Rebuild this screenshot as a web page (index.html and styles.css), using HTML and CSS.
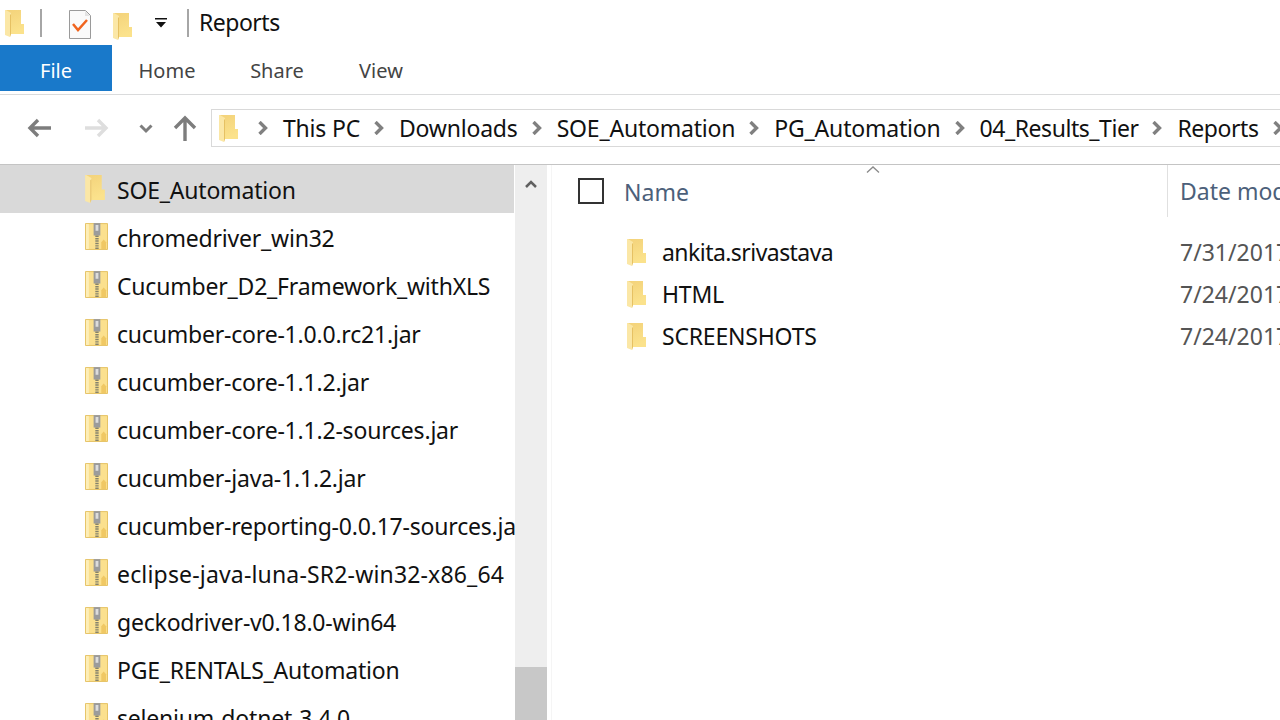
FILE: index.html
```html
<!doctype html>
<html lang="en">
<head>
<meta charset="utf-8">
<title>Reports</title>
<link rel="stylesheet" href="styles.css">
</head>
<body>
<svg class="defs" width="0" height="0">
  <defs>
    <linearGradient id="folderfill" x1="0" y1="0" x2="0.3" y2="1">
      <stop offset="0" stop-color="#f3d27a"/>
      <stop offset="1" stop-color="#fbe28c"/>
    </linearGradient>
  </defs>
  <symbol id="folder" viewBox="0 0 19 27">
    <path fill="url(#folderfill)" d="M0 0h16v14l3 0v10H6z"/>
    <path fill="#fbe7a6" d="M0 0h1l5 3v21l-1 3-5-2z"/>
    <path fill="#e6c163" d="M5 27V5l1-1v20z"/>
  </symbol>
  <symbol id="zip" viewBox="0 0 24 29">
    <path fill="#fbe08e" stroke="#e5c060" d="M.5.5h23v27H.5z"/>
    <path fill="#fdeeb8" d="M1 1h3v26H1z"/>
    <path fill="#f0c864" d="M19.500 17l2.500 3v7h-5v-7z"/>
    <path fill="#9b9b9b" d="M9 0h7v13H9z"/>
    <path fill="#dcdcdc" d="M11 2h3v6h-3z"/>
    <path fill="none" stroke="#85826c" stroke-width="3.500" stroke-dasharray="1.500 1" d="M12.500 13v15"/>
  </symbol>
  <symbol id="chev" viewBox="0 0 10 14">
    <path fill="none" stroke="#808080" stroke-width="3.400" d="M1.500 1l6 6-6 6"/>
  </symbol>
</svg>

<header class="titlebar">
  <svg class="qa-folder first"><use href="#folder"/></svg>
  <span class="qa-sep"></span>
  <svg class="qa-check" viewBox="0 0 22 29">
    <path fill="#fafafa" stroke="#9a9a9a" d="M.5.5h16l5 5v23H.5z"/>
    <path fill="#e3e3e3" d="M16 1v5h5z"/>
    <path fill="none" stroke="#f0641e" stroke-width="2.500" d="M4 14l5 6 9-10"/>
  </svg>
  <svg class="qa-folder second"><use href="#folder"/></svg>
  <svg class="qa-drop" viewBox="0 0 12 10">
    <path fill="#111" d="M0 0h12v1.400H0zM1 4h10L6 9.500z"/>
  </svg>
  <span class="qa-sep last"></span>
  <span class="title">Reports</span>
</header>

<nav class="tabs">
  <a class="tab file">File</a>
  <a class="tab home">Home</a>
  <a class="tab share">Share</a>
  <a class="tab view">View</a>
</nav>

<div class="addressrow">
  <svg class="nav back" viewBox="0 0 24 20"><path fill="none" stroke="#7d7d7d" stroke-width="3.400" d="M24 10H4M11 2l-8 8 8 8"/></svg>
  <svg class="nav forward" viewBox="0 0 24 20"><path fill="none" stroke="#dedede" stroke-width="3.400" d="M0 10h20M13 2l8 8-8 8"/></svg>
  <svg class="nav recent" viewBox="0 0 14 10"><path fill="none" stroke="#7d7d7d" stroke-width="3" d="M1.500 1.500L7 7l5.500-5.500"/></svg>
  <svg class="nav up" viewBox="0 0 24 26"><path fill="none" stroke="#7d7d7d" stroke-width="3.400" d="M12 26V4M2 13L12 3l10 10"/></svg>
  <div class="crumbs">
    <svg class="crumb-folder"><use href="#folder"/></svg>
    <svg class="chev"><use href="#chev"/></svg>
    <span class="crumb">This PC</span>
    <svg class="chev"><use href="#chev"/></svg>
    <span class="crumb">Downloads</span>
    <svg class="chev"><use href="#chev"/></svg>
    <span class="crumb">SOE_Automation</span>
    <svg class="chev"><use href="#chev"/></svg>
    <span class="crumb">PG_Automation</span>
    <svg class="chev"><use href="#chev"/></svg>
    <span class="crumb tight">04_Results_Tier</span>
    <svg class="chev"><use href="#chev"/></svg>
    <span class="crumb tight">Reports</span>
    <svg class="chev"><use href="#chev"/></svg>
  </div>
</div>

<main class="panes">
  <aside class="tree">
    <ul class="tree-list">
      <li class="tree-row selected"><svg class="tree-folder"><use href="#folder"/></svg><span>SOE_Automation</span></li>
      <li class="tree-row"><svg class="tree-zip"><use href="#zip"/></svg><span>chromedriver_win32</span></li>
      <li class="tree-row"><svg class="tree-zip"><use href="#zip"/></svg><span>Cucumber_D2_Framework_withXLS</span></li>
      <li class="tree-row"><svg class="tree-zip"><use href="#zip"/></svg><span>cucumber-core-1.0.0.rc21.jar</span></li>
      <li class="tree-row"><svg class="tree-zip"><use href="#zip"/></svg><span>cucumber-core-1.1.2.jar</span></li>
      <li class="tree-row"><svg class="tree-zip"><use href="#zip"/></svg><span>cucumber-core-1.1.2-sources.jar</span></li>
      <li class="tree-row"><svg class="tree-zip"><use href="#zip"/></svg><span>cucumber-java-1.1.2.jar</span></li>
      <li class="tree-row"><svg class="tree-zip"><use href="#zip"/></svg><span>cucumber-reporting-0.0.17-sources.jar</span></li>
      <li class="tree-row wide"><svg class="tree-zip"><use href="#zip"/></svg><span>eclipse-java-luna-SR2-win32-x86_64</span></li>
      <li class="tree-row"><svg class="tree-zip"><use href="#zip"/></svg><span>geckodriver-v0.18.0-win64</span></li>
      <li class="tree-row"><svg class="tree-zip"><use href="#zip"/></svg><span>PGE_RENTALS_Automation</span></li>
      <li class="tree-row"><svg class="tree-zip"><use href="#zip"/></svg><span>selenium-dotnet-3.4.0</span></li>
    </ul>
    <div class="scrollbar">
      <svg class="scroll-up" viewBox="0 0 12 8"><path fill="none" stroke="#606060" stroke-width="2.500" d="M1 7l5-5 5 5"/></svg>
      <div class="scroll-thumb"></div>
    </div>
  </aside>

  <section class="files">
    <div class="columns">
      <span class="checkbox"></span>
      <div class="col-name">
        Name
        <svg class="sort" viewBox="0 0 14 7"><path fill="none" stroke="#8a8a8a" stroke-width="1.300" d="M1 6.500l6-5.500 6 5.500"/></svg>
      </div>
      <div class="col-date">Date modified</div>
    </div>
    <ul class="file-list">
      <li class="file-row"><svg class="file-folder"><use href="#folder"/></svg><span class="file-name tight">ankita.srivastava</span><span class="file-date">7/31/2017 11:42 AM</span></li>
      <li class="file-row"><svg class="file-folder"><use href="#folder"/></svg><span class="file-name">HTML</span><span class="file-date">7/24/2017 3:10 PM</span></li>
      <li class="file-row"><svg class="file-folder"><use href="#folder"/></svg><span class="file-name">SCREENSHOTS</span><span class="file-date">7/24/2017 3:10 PM</span></li>
    </ul>
  </section>
</main>
</body>
</html>
```

FILE: styles.css
```css
* { box-sizing: border-box; }
html, body { height: 100%; }
body {
  margin: 0;
  height: 720px;
  overflow: hidden;
  background: #fff;
  color: #111;
  font-family: "Noto Sans", "Open Sans", sans-serif;
  font-size: 23px;
  letter-spacing: -0.2px;
}
ul { list-style: none; margin: 0; padding: 0; }
.defs { display: block; height: 0; }
svg { display: block; flex: none; }

/* title bar */
.titlebar {
  display: flex;
  align-items: center;
  height: 45px;
  padding-left: 5px;
}
.qa-folder { width: 19px; height: 27px; }
.qa-folder.first { margin-top: 1px; }
.qa-folder.second { margin-left: 22px; margin-top: 7px; }
.qa-sep { width: 2px; height: 28px; margin-left: 16px; background: #a6a6a6; }
.qa-sep.last { margin-left: 20px; margin-right: 10px; }
.qa-check { width: 22px; height: 29px; margin-left: 27px; margin-top: 4px; }
.qa-drop { width: 12px; height: 10px; margin-left: 23px; }
.title { font-size: 23px; letter-spacing: -0.5px; line-height: 49px; }

/* ribbon tabs */
.tabs {
  display: flex;
  height: 50px;
  border-bottom: 1px solid #dadbdc;
  color: #444;
  letter-spacing: 0;
}
.tab { height: 46px; line-height: 51px; text-align: center; font-size: 20px; }
.file { width: 112px; background: #1979ca; color: #fff; }
.home { width: 110px; }
.share { width: 110px; }
.view { width: 98px; }

/* address row */
.addressrow {
  display: flex;
  align-items: center;
  height: 70px;
  padding-bottom: 3px;
  border-bottom: 1px solid #c4c4c4;
  padding-left: 27px;
}
.back { width: 24px; height: 20px; }
.forward { width: 24px; height: 20px; margin-left: 34px; }
.recent { width: 14px; height: 10px; margin-left: 30px; margin-top: 2px; }
.up { width: 24px; height: 26px; margin-left: 20px; }
.crumbs {
  display: flex;
  align-items: center;
  flex: none;
  width: 1100px;
  height: 38px;
  margin-left: 14px;
  padding-left: 7px;
  border: 1px solid #d9d9d9;
  border-right: none;
  white-space: nowrap;
}
.crumb-folder { width: 19px; height: 27px; margin-right: 20px; }
.chev { width: 10px; height: 14px; margin: 0 15px 0 14px; }
.crumb-folder + .chev { margin-left: 0; }
.crumb.tight { letter-spacing: -0.45px; }

/* panes */
.panes { display: flex; height: 555px; }
.tree {
  display: flex;
  width: 552px;
  flex: none;
  border-right: 1px solid #f5f5f5;
}
.tree-list { width: 515px; flex: none; overflow: hidden; }
.tree-row {
  display: flex;
  align-items: center;
  height: 48px;
  padding-left: 85px;
  white-space: nowrap;
  width: 515px;
  overflow: hidden;
}
.tree-row span { padding-top: 2px; }
.tree-row.selected { background: #d9d9d9; width: 514px; }
.tree-row.wide { letter-spacing: 0.17px; }
.tree-folder { width: 20px; height: 28px; margin-right: 12px; }
.tree-zip { width: 23px; height: 28px; margin-right: 9px; }
.scrollbar {
  position: relative;
  width: 32px;
  background: #eee;
}
.scroll-up { width: 12px; height: 8px; margin: 15px 0 0 10px; }
.scroll-thumb {
  position: absolute;
  left: 0;
  right: 0;
  bottom: 0;
  height: 53px;
  background: #c8c8c8;
}

/* file list */
.files { flex: 1; min-width: 0; overflow: hidden; }
.columns {
  display: flex;
  align-items: center;
  height: 52px;
  padding-left: 26px;
  color: #4c607a;
  letter-spacing: 0;
}
.checkbox { width: 26px; height: 26px; border: 2px solid #333; flex: none; }
.col-name {
  position: relative;
  width: 564px;
  height: 52px;
  line-height: 54px;
  padding-left: 20px;
  border-right: 1px solid #e0e0e0;
  flex: none;
}
.sort { position: absolute; left: 262px; top: 1px; width: 14px; height: 7px; }
.col-date { padding-left: 12px; white-space: nowrap; }
.file-list { padding-top: 14px; }
.file-row {
  display: flex;
  align-items: center;
  height: 42px;
  padding-left: 75px;
  white-space: nowrap;
}
.file-folder { width: 19px; height: 27px; margin-right: 16px; }
.file-name { width: 518px; flex: none; }
.file-name.tight { letter-spacing: -0.55px; }
.file-date { color: #555; letter-spacing: 0; }
```
